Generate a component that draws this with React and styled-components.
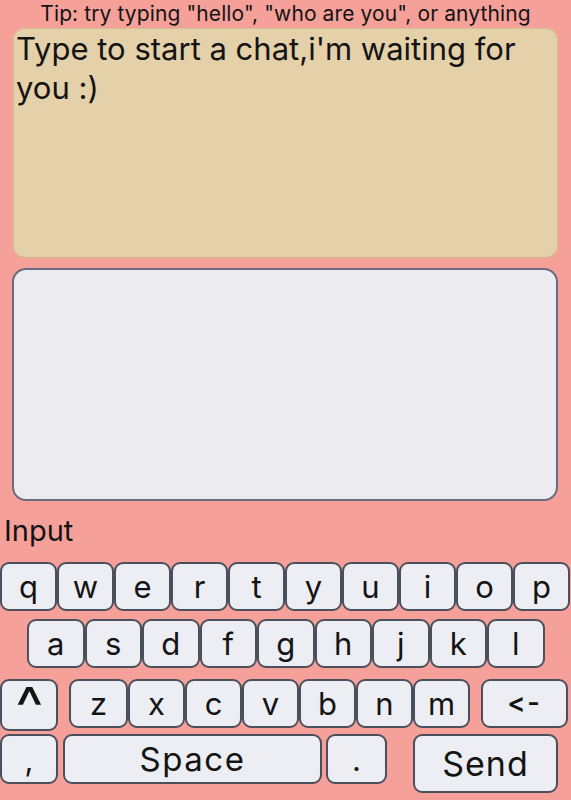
import React from "react";
import styled, { createGlobalStyle } from "styled-components";

const Global = createGlobalStyle`
  html, body { margin: 0; padding: 0; background: #f5a19a; }
  body {
    font-family: Inter, "Noto Sans", sans-serif;
    color: #141414;
    font-variant-ligatures: none;
    font-feature-settings: "calt" 0, "liga" 0;
  }
  #root { width: 571px; height: 800px; overflow: hidden; }
`;

const Page = styled.div`
  width: 571px;
  height: 800px;
  display: flex;
  flex-direction: column;
`;

const Tip = styled.div`
  height: 28px;
  line-height: 28px;
  font-size: 21px;
  text-align: center;
  white-space: nowrap;
  letter-spacing: 0.1px;
`;

const ChatBox = styled.div`
  margin: 0 13px 0 13px;
  height: 230px;
  box-sizing: border-box;
  background: #e4d0a9;
  border: 1px solid #d3c290;
  border-bottom-color: #cdb985;
  border-radius: 12px;
  font-size: 31px;
  line-height: 39px;
  padding: 0 0 0 2px;
`;

const InputBox = styled.div`
  margin: 10px 13px 0 12px;
  height: 233px;
  box-sizing: border-box;
  background: #ebebf0;
  border: 2px solid #6b6a80;
  border-radius: 14px;
`;

const Label = styled.div`
  margin: 10px 0 0 4px;
  font-size: 29px;
  line-height: 40px;
`;

const Keyboard = styled.div`
  margin-top: 11px;
  display: flex;
  flex-direction: column;
`;

const Row = styled.div`
  display: flex;
  align-items: flex-start;
  margin-top: ${(p) => p.$mt || 0}px;
  padding-left: ${(p) => p.$pl || 0}px;
`;

const Key = styled.div`
  box-sizing: border-box;
  width: ${(p) => p.$w || 57}px;
  height: ${(p) => p.$h || 49}px;
  margin-left: ${(p) => p.$ml || 0}px;
  flex: none;
  display: flex;
  align-items: center;
  justify-content: center;
  background: #eceef3;
  border: 2px solid #4c4f5c;
  border-radius: 9px;
  font-size: ${(p) => p.$fs || 31}px;
  letter-spacing: ${(p) => p.$ls || 0}px;
  color: #141414;
  line-height: 1;
`;

const CaretGlyph = styled.span`
  display: inline-block;
  font-size: 40px;
  font-weight: 400;
  line-height: 1;
  transform: translateY(3px) scale(1.5, 1.45);
`;

const BackKey = styled(Key)`
  font-weight: 600;
  padding-bottom: 3px;
`;

const row1 = "qwertyuiop".split("");
const row2 = "asdfghjkl".split("");
const row3 = "zxcvbnm".split("");

export default function App() {
  return (
    <Page>
      <Global />
      <Tip>Tip: try typing "hello", "who are you", or anything</Tip>
      <ChatBox>Type to start a chat,i'm waiting for you :)</ChatBox>
      <InputBox />
      <Label>Input</Label>
      <Keyboard>
        <Row>
          {row1.map((k) => (
            <Key key={k}>{k}</Key>
          ))}
        </Row>
        <Row $mt={8} $pl={27}>
          {row2.map((k) => (
            <Key key={k} $w={57.5}>{k}</Key>
          ))}
        </Row>
        <Row $mt={11}>
          <Key $w={58} $h={52}>
            <CaretGlyph>^</CaretGlyph>
          </Key>
          <Key $ml={11} $w={59}>z</Key>
          {row3.slice(1).map((k) => (
            <Key key={k}>{k}</Key>
          ))}
          <BackKey $ml={11} $w={87} $fs={27} $ls={2}>&lt;-</BackKey>
        </Row>
        <Row $mt={3}>
          <Key $w={58} $h={50}>,</Key>
          <Key $ml={5} $w={259} $h={50} $fs={33} $ls={1.5}>Space</Key>
          <Key $ml={4} $w={61} $h={50}>.</Key>
          <Key $ml={26} $w={145} $h={59} $fs={34} $ls={1}>Send</Key>
        </Row>
      </Keyboard>
    </Page>
  );
}
